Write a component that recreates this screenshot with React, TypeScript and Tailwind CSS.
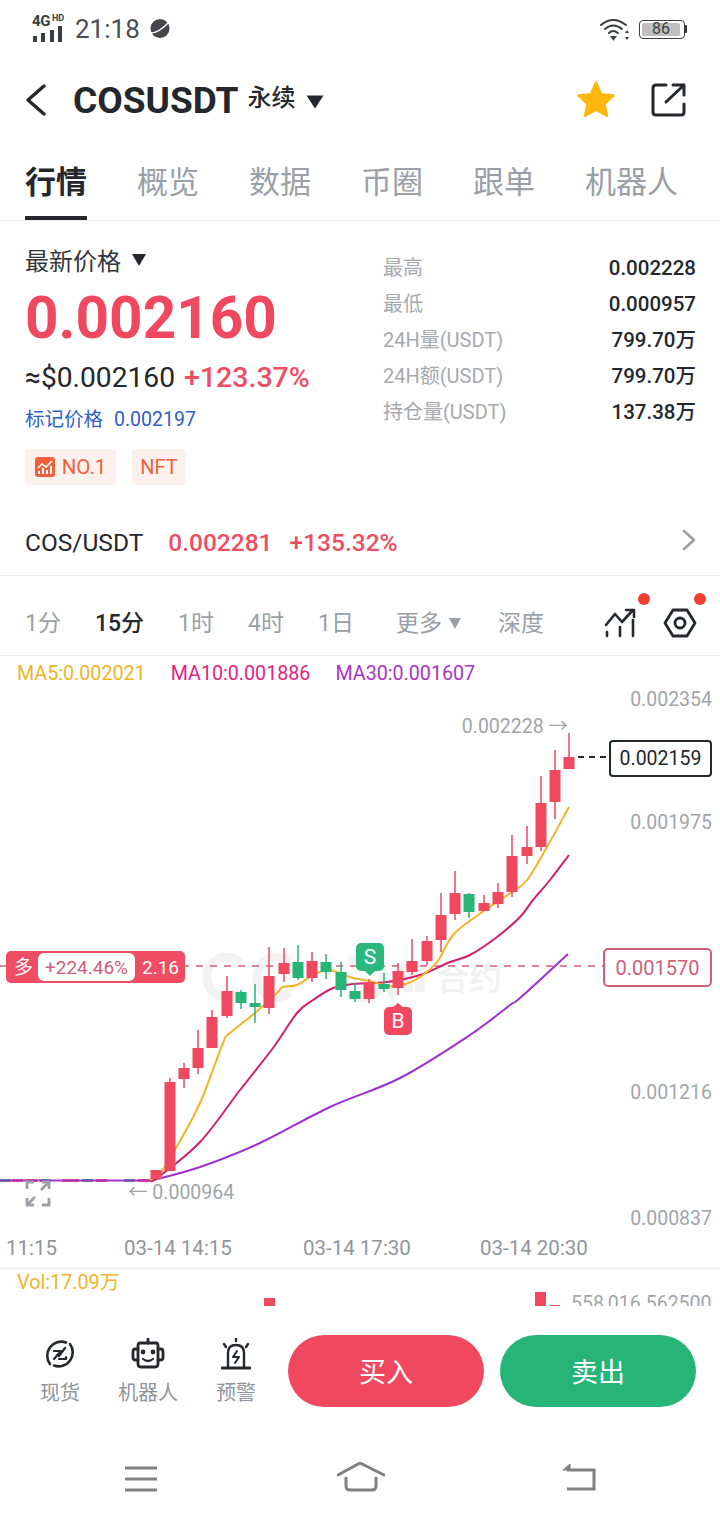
const FONT = { fontFamily: 'Roboto, "Noto Sans CJK SC", sans-serif' }

const RED = '#f0495f'
const GREEN = '#27b577'

// x, body top, body bottom, wick top, wick bottom, up?
const candles: [number, number, number, number, number, boolean][] = [
    [156, 1170, 1179, 1170, 1179, true],
    [170, 1082, 1171, 1078, 1171, true],
    [184, 1068, 1079, 1063, 1088, true],
    [198, 1048, 1068, 1030, 1074, true],
    [212, 1017, 1048, 1010, 1048, true],
    [227, 991, 1016, 976, 1018, true],
    [241, 992, 1003, 990, 1009, false],
    [255, 1003, 1007, 984, 1023, false],
    [269, 976, 1008, 947, 1014, true],
    [284, 963, 974, 948, 982, true],
    [298, 962, 978, 945, 980, false],
    [312, 961, 978, 952, 982, true],
    [326, 962, 972, 954, 979, false],
    [341, 972, 990, 962, 997, false],
    [355, 991, 999, 983, 1002, false],
    [369, 982, 999, 979, 1003, true],
    [384, 984, 989, 973, 992, false],
    [398, 971, 988, 963, 995, true],
    [412, 961, 972, 939, 975, true],
    [427, 941, 961, 936, 965, true],
    [441, 915, 940, 893, 952, true],
    [455, 893, 914, 871, 920, true],
    [469, 894, 912, 893, 918, false],
    [484, 903, 911, 895, 911, true],
    [498, 892, 904, 883, 908, true],
    [512, 856, 892, 835, 897, true],
    [527, 847, 856, 826, 864, true],
    [541, 803, 847, 776, 851, true],
    [555, 770, 802, 750, 819, true],
    [569, 757, 769, 733, 757, true],
]

type Pt = [number, number]

const ma5: Pt[] = [[150, 1180], [161, 1172], [176, 1148], [200, 1103], [223, 1043], [230, 1033], [255, 1013], [277, 993], [283, 987], [297, 985], [313, 975], [327, 970], [337, 972], [353, 978], [370, 981], [387, 986], [403, 985], [420, 977], [437, 962], [453, 935], [478, 915], [512, 892], [527, 880], [547, 847], [569, 807]]
const ma10: Pt[] = [[150, 1180], [157, 1178], [200, 1142], [240, 1090], [273, 1048], [297, 1013], [313, 1000], [333, 988], [353, 984], [387, 982], [420, 975], [450, 962], [470, 955], [497, 937], [520, 917], [533, 900], [550, 880], [569, 855]]
const ma30: Pt[] = [[150, 1181], [200, 1167], [260, 1143], [330, 1107], [400, 1078], [470, 1035], [510, 1005], [520, 998], [568, 954]]

// catmull-rom through the points so the averages read as curves
function smooth(pts: Pt[]) {
    let d = `M${pts[0][0]} ${pts[0][1]}`
    for (let i = 0; i < pts.length - 1; i++) {
        const p0 = pts[Math.max(i - 1, 0)]
        const p1 = pts[i]
        const p2 = pts[i + 1]
        const p3 = pts[Math.min(i + 2, pts.length - 1)]
        const c1x = p1[0] + (p2[0] - p0[0]) / 6
        const c1y = p1[1] + (p2[1] - p0[1]) / 6
        const c2x = p2[0] - (p3[0] - p1[0]) / 6
        const c2y = p2[1] - (p3[1] - p1[1]) / 6
        d += ` C${c1x} ${c1y} ${c2x} ${c2y} ${p2[0]} ${p2[1]}`
    }
    return d
}

const flat: [number, string][] = [
    [0, GREEN], [12, RED], [26, RED], [40, GREEN], [62, RED], [68, RED], [82, GREEN], [96, RED], [124, GREEN], [138, RED],
]

function AxisLabel({ y, right = 8, children }: { y: number; right?: number; children: string }) {
    return (
        <span className="absolute text-[19.5px] leading-none text-[#a0a5aa] -translate-y-1/2" style={{ top: y - 655, right }}>
            {children}
        </span>
    )
}

function TimeLabel({ x, children }: { x: number; children: string }) {
    return (
        <span className="absolute top-[581px] text-[20.5px] leading-[22px] text-[#8f959b]" style={{ left: x }}>
            {children}
        </span>
    )
}

function StatRow({ label, value }: { label: string; value: string }) {
    return (
        <div className="flex h-[36px] items-center justify-between">
            <span className="text-[20px] text-[#a5aaaf]">{label}</span>
            <span className="text-[20.5px] font-medium text-[#24272c]">{value}</span>
        </div>
    )
}

function ToolItem({ label, children }: { label: string; children: React.ReactNode }) {
    return (
        <div className="flex w-[88px] flex-col items-center">
            <div className="flex h-[32px] items-center justify-center">{children}</div>
            <span className="mt-[11px] text-[20px] leading-[24px] text-[#8f959b]">{label}</span>
        </div>
    )
}

export default function App() {
    return (
        <div className="relative h-[1520px] w-[720px] overflow-hidden bg-white" style={FONT}>
            {/* status bar */}
            <div className="flex h-[58px] items-center justify-between pl-[32px] pr-[33px]">
                <div className="flex items-center">
                    <div className="relative h-[28px] w-[34px]">
                        <span className="absolute left-0 top-[-2px] text-[15px] font-bold leading-[16px] tracking-tight text-[#3a3d42]">4G</span>
                        <span className="absolute left-[20px] top-[-2px] text-[9px] font-bold leading-[10px] text-[#3a3d42]">HD</span>
                        <svg className="absolute left-0 top-[10px]" width="32" height="18" viewBox="0 0 32 18">
                            <rect x="1" y="11" width="4" height="6" fill="#3a3d42" />
                            <rect x="9" y="8" width="4" height="9" fill="#3a3d42" />
                            <rect x="18" y="5" width="4" height="12" fill="#3a3d42" />
                            <rect x="26" y="1" width="4" height="16" fill="#3a3d42" />
                        </svg>
                    </div>
                    <span className="ml-[9px] text-[26px] leading-none text-[#4a4d52]">21:18</span>
                    <svg className="ml-[9px]" width="22" height="22" viewBox="0 0 22 22">
                        <circle cx="11" cy="10.5" r="9.5" fill="#44474c" />
                        <path d="M1.5 15 Q10 15 20 4" fill="none" stroke="#fff" strokeWidth="1.4" />
                    </svg>
                </div>
                <div className="flex items-center gap-[8px]">
                    <svg width="31" height="24" viewBox="0 0 31 24" fill="none" stroke="#3a3d42" strokeWidth="2" strokeLinecap="round">
                        <path d="M1 8 Q13 -2 26 8" />
                        <path d="M5 12 Q13 5 22 12" />
                        <path d="M9 16 Q13 12 18 16" />
                        <path d="M12 20 L13.5 22 L15 20 Z" fill="#3a3d42" />
                        <path d="M27 13 L29 16 H25 Z M27 23 L25 20 H29 Z" fill="#3a3d42" stroke="none" />
                    </svg>
                    <div className="flex items-center">
                        <div className="flex h-[19px] w-[46px] items-center rounded-[4px] border border-[#3a3d42] p-[2px]">
                            <div className="flex h-full w-[38px] items-center justify-center rounded-[2px] bg-[#bfbfbf] text-[16px] leading-none text-[#3a3d42]">86</div>
                        </div>
                        <div className="h-[8px] w-[2px] rounded-r-[1px] bg-[#3a3d42]" />
                    </div>
                </div>
            </div>

            {/* header */}
            <div className="flex h-[84px] items-center justify-between pl-[25px] pr-[33px]">
                <div className="flex items-center">
                    <svg width="22" height="32" viewBox="0 0 22 32" fill="none" stroke="#24272c" strokeWidth="3.4" strokeLinecap="round" strokeLinejoin="round">
                        <path d="M19 2 L3 16 L19 30" />
                    </svg>
                    <span className="ml-[26px] text-[37px] font-bold leading-none text-[#24272c]">COSUSDT</span>
                    <span className="ml-[9px] mb-[4px] text-[24px] font-medium leading-none text-[#24272c]">永续</span>
                    <svg className="ml-[11px] mt-[3px]" width="18" height="14" viewBox="0 0 18 14">
                        <path d="M0.5 0.5 H17.5 L9 13.5 Z" fill="#24272c" />
                    </svg>
                </div>
                <div className="flex items-center gap-[35px]">
                    <svg width="40" height="38" viewBox="0 0 24 23">
                        <path
                            d="M12 1 L15 8 L22.5 8.8 L17 13.8 L18.6 21 L12 17.3 L5.4 21 L7 13.8 L1.5 8.8 L9 8 Z"
                            fill="#ffb70f"
                            stroke="#ffb70f"
                            strokeWidth="1.6"
                            strokeLinejoin="round"
                        />
                    </svg>
                    <svg width="36" height="36" viewBox="0 0 36 36" fill="none" stroke="#24272c" strokeWidth="3" strokeLinecap="round" strokeLinejoin="round">
                        <path d="M15 3 H5 Q2 3 2 6 V30 Q2 33 5 33 H30 Q33 33 33 30 V22" />
                        <path d="M15 20 L33 3 M22 3 H33 V13" />
                    </svg>
                </div>
            </div>

            {/* tabs */}
            <div className="flex h-[79px] gap-[50px] border-b border-[#eeeeee] pl-[25px]">
                {['行情', '概览', '数据', '币圈', '跟单', '机器人'].map((t, i) => (
                    <div key={t} className="relative flex h-full items-center pt-[2px]">
                        <span className={`text-[31px] leading-none ${i === 0 ? 'font-bold text-[#24272c]' : 'text-[#9aa0a5]'}`}>{t}</span>
                        {i === 0 && <div className="absolute bottom-0 left-0 h-[4px] w-full bg-[#24272c]" />}
                    </div>
                ))}
            </div>

            {/* price info */}
            <div className="flex h-[284px]">
                <div className="w-[359px] pl-[25px] pt-[26px]">
                    <div className="flex h-[30px] items-center text-[24px] text-[#33363b]">
                        最新价格
                        <svg className="ml-[11px] mb-[4px]" width="14" height="12" viewBox="0 0 14 12">
                            <path d="M0 0 H14 L7 12 Z" fill="#24272c" />
                        </svg>
                    </div>
                    <div className="mt-[11px] h-[60px] text-[58.5px] font-bold leading-[60px] text-[#f0495f]">0.002160</div>
                    <div className="mt-[13px] flex h-[34px] items-center">
                        <span className="text-[28.2px] leading-none text-[#24272c]">≈$0.002160</span>
                        <span className="ml-[9px] text-[28.5px] font-medium leading-none text-[#ee4d63]">+123.37%</span>
                    </div>
                    <div className="mt-[12px] flex h-[26px] items-center text-[19.5px] text-[#2f5fc4]">
                        <span>标记价格</span>
                        <span className="ml-[11px]">0.002197</span>
                    </div>
                    <div className="mt-[16px] flex gap-[16px]">
                        <div className="flex h-[36px] w-[91px] items-center justify-center gap-[7px] rounded-[4px] bg-[#fdf1ee]">
                            <svg width="20" height="20" viewBox="0 0 20 20">
                                <rect width="20" height="20" rx="3" fill="#f0603c" />
                                <path d="M3 11 L7 7 L11 10 L17 4" fill="none" stroke="#fff" strokeWidth="1.6" />
                                <path d="M4 17 V14 M8 17 V11 M12 17 V13 M16 17 V9" stroke="#fff" strokeWidth="2" />
                            </svg>
                            <span className="text-[20.5px] leading-none text-[#f0603c]">NO.1</span>
                        </div>
                        <div className="flex h-[36px] w-[54px] items-center justify-center rounded-[4px] bg-[#fdf1ee] text-[20px] leading-none text-[#f0603c]">NFT</div>
                    </div>
                </div>
                <div className="flex-1 pl-[24px] pr-[24px] pt-[29px]">
                    <StatRow label="最高" value="0.002228" />
                    <StatRow label="最低" value="0.000957" />
                    <StatRow label="24H量(USDT)" value="799.70万" />
                    <StatRow label="24H额(USDT)" value="799.70万" />
                    <StatRow label="持仓量(USDT)" value="137.38万" />
                </div>
            </div>

            {/* spot pair */}
            <div className="flex h-[71px] items-center border-b border-[#eeeeee] pl-[25px] pr-[24px] pt-[6px]">
                <span className="text-[24.5px] text-[#24272c]">COS/USDT</span>
                <span className="ml-[25px] text-[24.5px] font-medium text-[#ee4d63]">0.002281</span>
                <span className="ml-[17px] text-[24.5px] font-medium text-[#ee4d63]">+135.32%</span>
                <svg className="ml-auto mb-[6px]" width="14" height="22" viewBox="0 0 14 22" fill="none" stroke="#9aa0a5" strokeWidth="2.6" strokeLinecap="round" strokeLinejoin="round">
                    <path d="M2 2 L12 11 L2 20" />
                </svg>
            </div>

            {/* intervals */}
            <div className="relative flex h-[80px] items-center border-b border-[#eeeeee] pl-[25px] pt-[15px] text-[23px] leading-none text-[#9aa0a5]">
                <div className="flex items-center gap-[34px]">
                    <span>1分</span>
                    <span className="font-medium text-[#24272c]">15分</span>
                    <span>1时</span>
                    <span>4时</span>
                    <span>1日</span>
                </div>
                <div className="ml-[42px] flex items-center gap-[7px]">
                    更多
                    <svg width="12" height="11" viewBox="0 0 12 11">
                        <path d="M0 0 H12 L6 11 Z" fill="#9aa0a5" />
                    </svg>
                </div>
                <span className="ml-[37px]">深度</span>
                <svg className="ml-[60px]" width="32" height="30" viewBox="0 0 32 30" fill="none" stroke="#24272c" strokeWidth="2.6" strokeLinecap="round" strokeLinejoin="round">
                    <path d="M2 17 L11 6 L18 14 L29 2 M22 2 H30 V9" />
                    <path d="M3 24 V28 M16 19 V28 M29 12 V28" />
                </svg>
                <svg className="ml-[27px]" width="34" height="30" viewBox="0 0 34 30" fill="none" stroke="#24272c" strokeWidth="2.8" strokeLinejoin="round">
                    <path d="M10 2 H24 L32 15 L24 28 H10 L2 15 Z" />
                    <circle cx="17" cy="15" r="5" />
                </svg>
                <span className="absolute left-[638px] top-[17px] h-[12px] w-[12px] rounded-full bg-[#ee3f2f]" />
                <span className="absolute left-[694px] top-[17px] h-[12px] w-[12px] rounded-full bg-[#ee3f2f]" />
            </div>

            {/* chart */}
            <div className="relative h-[613px] border-b border-[#e8e8e8]">
                <div className="absolute left-[17px] top-[5px] flex gap-[25px] text-[19.7px] leading-[26px]">
                    <span className="text-[#f0b429]">MA5:0.002021</span>
                    <span className="text-[#e0257f]">MA10:0.001886</span>
                    <span className="text-[#a833c9]">MA30:0.001607</span>
                </div>

                {/* watermark */}
                <span className="absolute left-[436px] top-[306px] text-[33px] font-medium leading-none text-[#f1f1f1]">合约</span>

                <svg className="absolute left-0 top-0" width="720" height="612" viewBox="0 656 720 612">
                    <g fill="none" stroke="#f2f2f2" strokeWidth="9">
                        <path d="M240 962 A20 20 0 1 0 240 992" />
                        <path d="M290 962 A20 20 0 1 0 290 992" />
                        <path d="M350 962 A20 20 0 1 1 349 992" />
                        <path d="M376 962 L392 992 L408 962 V992 M420 962 V992" />
                    </g>
                    <line x1="0" y1="966" x2="604" y2="966" stroke="#cf5f77" strokeWidth="1.4" strokeDasharray="7 7" />
                    <line x1="578" y1="757" x2="609" y2="757" stroke="#24272c" strokeWidth="2" strokeDasharray="6 5" />
                    {flat.map(([x, c], i) => (
                        <rect key={i} x={x} y="1179" width="11" height="3" fill={c} />
                    ))}
                    <line x1="0" y1="1180.5" x2="150" y2="1180.5" stroke="#a833c9" strokeWidth="2" />
                    <path d={smooth(ma30)} fill="none" stroke="#a02fd0" strokeWidth="2" />
                    <path d={smooth(ma10)} fill="none" stroke="#d1206f" strokeWidth="2" />
                    <path d={smooth(ma5)} fill="none" stroke="#f0b429" strokeWidth="2" />
                    {candles.map(([x, top, bottom, wickTop, wickBottom, up]) => (
                        <g key={x} fill={up ? RED : GREEN}>
                            <rect x={x - 0.75} y={wickTop} width="1.5" height={wickBottom - wickTop} />
                            <rect x={x - 5.5} y={top} width="11" height={bottom - top} />
                        </g>
                    ))}
                    <path d="M364 970 H376 L370 976 Z" fill="#2bb87f" />
                    <path d="M392 1008 H404 L398 1003 Z" fill="#f0495f" />
                </svg>

                <AxisLabel y={699}>0.002354</AxisLabel>
                <AxisLabel y={822}>0.001975</AxisLabel>
                <AxisLabel y={1092}>0.001216</AxisLabel>
                <AxisLabel y={1218}>0.000837</AxisLabel>
                <AxisLabel y={726} right={152}>0.002228 →</AxisLabel>
                <span className="absolute left-[128px] top-[526px] text-[19.5px] leading-[22px] text-[#a0a5aa]">← 0.000964</span>

                <div className="absolute left-[609px] top-[84px] flex h-[37px] w-[103px] items-center justify-center rounded-[4px] border-2 border-[#24272c] bg-white text-[19.5px] leading-none text-[#24272c]">
                    0.002159
                </div>
                <div className="absolute left-[603px] top-[292px] flex h-[39px] w-[109px] items-center justify-center rounded-[5px] border-2 border-[#cf5f77] bg-white text-[20px] leading-none text-[#cf5f77]">
                    0.001570
                </div>

                <div className="absolute left-[6px] top-[295px] flex h-[32px] w-[179px] items-center rounded-[5px] bg-[#ee4d63] pl-[8px] text-[19px] leading-none text-white">
                    <span className="w-[24px]">多</span>
                    <span className="flex h-[28px] w-[97px] items-center justify-center rounded-[6px] bg-white text-[#c9607a]">+224.46%</span>
                    <span className="ml-[7px]">2.16</span>
                </div>

                <div className="absolute left-[356px] top-[287px] flex h-[28px] w-[28px] items-center justify-center rounded-[5px] bg-[#2bb87f] text-[21px] leading-none text-white">S</div>
                <div className="absolute left-[384px] top-[351px] flex h-[28px] w-[28px] items-center justify-center rounded-[5px] bg-[#f0495f] text-[21px] leading-none text-white">B</div>

                <svg className="absolute left-[25px] top-[524px]" width="26" height="27" viewBox="0 0 26 27" fill="none" stroke="#9aa0a5" strokeWidth="2.8">
                    <path d="M2 9 V2 H9 M17 2 H24 V9 M2 18 V25 H9 M17 25 H24 V18" />
                    <path d="M3 24 L10 17 M23 3 L16 10" />
                </svg>

                <TimeLabel x={6}>11:15</TimeLabel>
                <TimeLabel x={124}>03-14 14:15</TimeLabel>
                <TimeLabel x={303}>03-14 17:30</TimeLabel>
                <TimeLabel x={480}>03-14 20:30</TimeLabel>
            </div>

            {/* volume */}
            <div className="relative h-[37px] overflow-hidden">
                <span className="absolute left-[17px] top-[2px] text-[19.8px] leading-[24px] text-[#f0b429]">Vol:17.09万</span>
                <svg className="absolute left-0 top-0" width="720" height="37" viewBox="0 1269 720 37">
                    <rect x="264" y="1298" width="11" height="8" fill="#f0495f" />
                    <rect x="535" y="1292" width="11" height="14" fill="#f0495f" />
                    <rect x="550" y="1305" width="10" height="1" fill="#f0495f" />
                </svg>
                <span className="absolute left-[571px] top-[24px] text-[19.5px] leading-[22px] text-[#a0a5aa]">558,016.562500</span>
            </div>

            {/* actions */}
            <div className="flex h-[114px] items-start pt-[29px]">
                <div className="flex w-[280px] shrink-0 pl-[16px] pt-[3px]">
                    <ToolItem label="现货">
                        <svg width="32" height="32" viewBox="0 0 32 32" fill="none" stroke="#24272c" strokeWidth="2.6" strokeLinecap="round" strokeLinejoin="round">
                            <path d="M22 4.5 A14 14 0 0 0 6 26 M10 27.5 A14 14 0 0 0 26 6" />
                            <path d="M10 13 H17 L10 21 M15 21 H22 V19 M21 10 L15 18" strokeWidth="2.2" />
                        </svg>
                    </ToolItem>
                    <ToolItem label="机器人">
                        <svg width="34" height="32" viewBox="0 0 34 32" fill="none" stroke="#24272c" strokeWidth="2.8" strokeLinecap="round" strokeLinejoin="round">
                            <path d="M17 1 V5" />
                            <path d="M9 5 H25 Q27 5 27 8 V26 Q27 29 24 29 H10 Q7 29 7 26 V8 Q7 5 9 5 Z" />
                            <path d="M7 11 H4 Q2 11 2 14 V19 Q2 22 4 22 H7 M27 11 H30 Q32 11 32 14 V19 Q32 22 30 22 H27" />
                            <path d="M12 21 Q17 25 22 21" strokeWidth="2.2" />
                            <circle cx="12" cy="14" r="1" fill="#24272c" />
                            <circle cx="22" cy="14" r="1" fill="#24272c" />
                        </svg>
                    </ToolItem>
                    <ToolItem label="预警">
                        <svg width="30" height="32" viewBox="0 0 30 32" fill="none" stroke="#24272c" strokeWidth="2.4" strokeLinecap="round" strokeLinejoin="round">
                            <path d="M15 1 V3 M3 6 L5 9 M27 6 L25 9" />
                            <path d="M7 29 V15 Q7 7 15 7 Q23 7 23 15 V29" />
                            <path d="M1 30 H29" strokeWidth="3" />
                            <path d="M16 13 L12 19 H18 L14 25" strokeWidth="2" />
                        </svg>
                    </ToolItem>
                </div>
                <div className="ml-[8px] flex gap-[16px]">
                    <button type="button" className="flex h-[72px] w-[196px] items-center justify-center rounded-full bg-[#f0495f] pt-[5px] text-[27px] text-white">买入</button>
                    <button type="button" className="flex h-[72px] w-[196px] items-center justify-center rounded-full bg-[#27b577] pt-[5px] text-[27px] text-white">卖出</button>
                </div>
            </div>

            {/* system nav */}
            <div className="relative h-[100px]">
                <svg className="absolute left-[124px] top-[46px]" width="34" height="26" viewBox="0 0 34 26" fill="none" stroke="#808080" strokeWidth="3">
                    <path d="M1 2 H33 M1 13 H33 M1 24 H33" />
                </svg>
                <svg className="absolute left-[337px] top-[42px]" width="48" height="30" viewBox="0 0 48 30" fill="none" stroke="#808080" strokeWidth="3" strokeLinecap="round" strokeLinejoin="round">
                    <path d="M1 13 L23 1 L47 13" />
                    <path d="M9 16 V24 Q9 28 13 28 H35 Q39 28 39 24 V16" />
                </svg>
                <svg className="absolute left-[562px] top-[43px]" width="34" height="28" viewBox="0 0 34 28" fill="none" stroke="#808080" strokeWidth="3">
                    <path d="M5 7 H32 V26 H5" />
                    <path d="M8 1 L1 7 L8 7 Z" fill="#808080" strokeWidth="1" />
                </svg>
            </div>
        </div>
    )
}
